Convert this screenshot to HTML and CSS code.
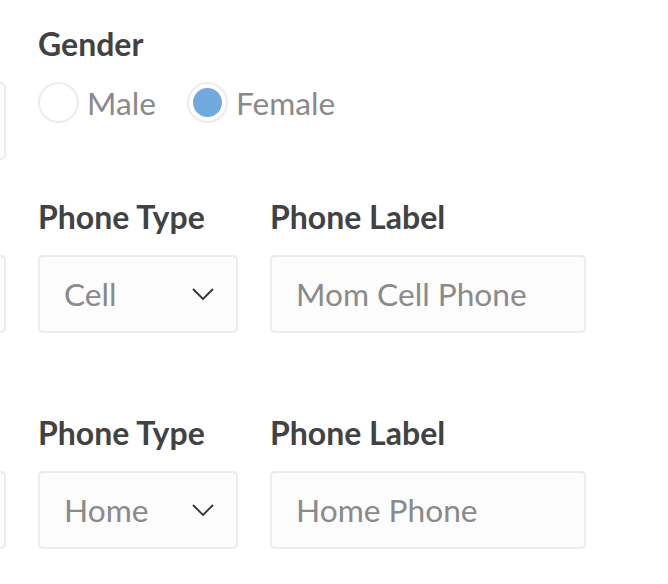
FILE: index.html
```html
<!DOCTYPE html>
<html lang="en">
<head>
<meta charset="utf-8">
<title>Contact form</title>
<link rel="stylesheet" href="styles.css">
</head>
<body>
<form class="form">
  <div class="row row-gender">
    <div class="field field-left">
      <span class="label">&nbsp;</span>
      <div class="box"></div>
    </div>
    <div class="field">
      <span class="label">Gender</span>
      <div class="radios">
        <label class="radio"><span class="dot"></span><span class="radio-text">Male</span></label>
        <label class="radio"><span class="dot checked"></span><span class="radio-text">Female</span></label>
      </div>
    </div>
  </div>

  <div class="row row-phone">
    <div class="field field-left">
      <span class="label">&nbsp;</span>
      <div class="box"></div>
    </div>
    <div class="field field-type">
      <span class="label">Phone Type</span>
      <div class="box select"><span>Cell</span>
        <svg class="chevron" width="22" height="12" viewBox="0 0 22 12"><path d="M1 1 L11 11 L21 1" fill="none" stroke="#333" stroke-width="1.8"/></svg>
      </div>
    </div>
    <div class="field field-name">
      <span class="label">Phone Label</span>
      <div class="box"><span>Mom Cell Phone</span></div>
    </div>
  </div>

  <div class="row row-phone row-last">
    <div class="field field-left">
      <span class="label">&nbsp;</span>
      <div class="box"></div>
    </div>
    <div class="field field-type">
      <span class="label">Phone Type</span>
      <div class="box select"><span>Home</span>
        <svg class="chevron" width="22" height="12" viewBox="0 0 22 12"><path d="M1 1 L11 11 L21 1" fill="none" stroke="#333" stroke-width="1.8"/></svg>
      </div>
    </div>
    <div class="field field-name">
      <span class="label">Phone Label</span>
      <div class="box"><span>Home Phone</span></div>
    </div>
  </div>
</form>
</body>
</html>
```

FILE: styles.css
```css
html, body {
  margin: 0;
  padding: 0;
  background: #ffffff;
  overflow: hidden;
}

body {
  font-family: Lato, "Open Sans", sans-serif;
  width: 668px;
  height: 584px;
}

.form {
  margin-left: -194px;
  padding-top: 25px;
}

.row {
  display: flex;
  gap: 32px;
}

.row-phone {
  margin-top: 38px;
}

.row-last {
  margin-top: 81px;
}

.field {
  display: flex;
  flex-direction: column;
}

.field-left {
  width: 200px;
}

.field-type {
  width: 200px;
}

.field-name {
  width: 316px;
}

.label {
  font-size: 32px;
  font-weight: 700;
  line-height: 38px;
  color: #424242;
  margin-bottom: 19px;
}

.box {
  box-sizing: border-box;
  height: 78px;
  border: 2px solid #ececec;
  border-radius: 5px;
  background: #fcfcfc;
  display: flex;
  align-items: center;
  justify-content: space-between;
  padding: 0 22px 0 24px;
  font-size: 31.7px;
  color: #8a8a8a;
}

.chevron {
  display: block;
}

.radios {
  display: flex;
  align-items: center;
  gap: 31px;
  height: 41px;
}

.radio {
  display: flex;
  align-items: center;
  gap: 8px;
  font-size: 31.7px;
  color: #8a8a8a;
}

.dot {
  box-sizing: border-box;
  width: 41px;
  height: 41px;
  border-radius: 50%;
  border: 2px solid #ececec;
  background: #ffffff;
  position: relative;
}

.dot.checked::after {
  content: "";
  position: absolute;
  left: 4px;
  top: 4px;
  width: 29px;
  height: 29px;
  border-radius: 50%;
  background: #6fa9dd;
}
```
